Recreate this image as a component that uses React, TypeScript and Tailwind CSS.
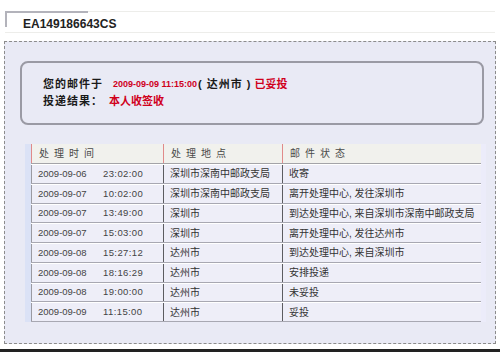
const rows = [
  ["2009-09-06", "23:02:00", "深圳市深南中邮政支局", "收寄"],
  ["2009-09-07", "10:02:00", "深圳市深南中邮政支局", "离开处理中心, 发往深圳市"],
  ["2009-09-07", "13:49:00", "深圳市", "到达处理中心, 来自深圳市深南中邮政支局"],
  ["2009-09-07", "15:03:00", "深圳市", "离开处理中心, 发往达州市"],
  ["2009-09-08", "15:27:12", "达州市", "到达处理中心, 来自深圳市"],
  ["2009-09-08", "18:16:29", "达州市", "安排投递"],
  ["2009-09-08", "19:00:00", "达州市", "未妥投"],
  ["2009-09-09", "11:15:00", "达州市", "妥投"],
]

function InfoBox() {
  return (
    <div className="ml-[15px] mr-[11px] mt-[19px] h-[64px] rounded-[8px] border-2 border-[#9a9aa4] pl-[21px] pt-[14px] flex flex-col gap-[3px] font-bold text-[11px] leading-[14px]">
      <div className="flex items-center text-[#1a1a1a]">
        <span className="tracking-[1px]">您的邮件于</span>
        <span className="ml-[10px] text-[9px] text-[#d0001c]">2009-09-09 11:15:00</span>
        <span className="ml-[1px] tracking-[1px]">( 达州市 )</span>
        <span className="ml-[3px] text-[#d0001c]">已妥投</span>
      </div>
      <div className="flex items-center text-[#1a1a1a]">
        <span className="tracking-[1px]">投递结果：</span>
        <span className="ml-[6px] text-[#d0001c]">本人收签收</span>
      </div>
    </div>
  )
}

function TrackTable() {
  return (
    <div className="mt-[19px] ml-[20px] mr-[9px] flex">
      {/* light strip on the left of the table */}
      <div className="w-[6px] bg-[#dbe2f6]" />
      <div className="flex-1 flex flex-col">
        <div className="h-[20px] flex bg-[#f1f1ed] border-b border-[#a4a4a8] text-[10px] text-[#4a4a4a] tracking-[5px]">
          <div className="w-[132px] border-l border-[#e08a8a] pl-[7px] flex items-center">处理时间</div>
          <div className="w-[119px] border-l border-[#e08a8a] pl-[7px] flex items-center">处理地点</div>
          <div className="flex-1 border-l border-[#e08a8a] pl-[7px] flex items-center">邮件状态</div>
        </div>
        {rows.map((r, i) => (
          <div
            key={i}
            className="h-[19.75px] flex bg-[#eeeef8] border-t border-white border-b border-b-[#a8a8b2] text-[10px] text-[#333]"
          >
            <div className="w-[132px] border-l border-[#9a9aa2] pl-[6px] flex items-center text-[9.5px] text-[#444]">
              <span className="w-[65px]">{r[0]}</span>
              <span className="tracking-[0.4px]">{r[1]}</span>
            </div>
            <div className="w-[119px] border-l border-[#5c5c60] pl-[6px] flex items-center">{r[2]}</div>
            <div className="flex-1 border-l border-[#5c5c60] pl-[6px] flex items-center">{r[3]}</div>
          </div>
        ))}
      </div>
      <div className="w-[5px] bg-[#ececfa]" />
    </div>
  )
}

export default function App() {
  return (
    <div className="w-[500px] h-[352px] bg-white flex flex-col overflow-hidden font-['Liberation_Sans','Noto_Sans_CJK_SC',sans-serif]">
      {/* tab with mail number */}
      <div className="pt-[11px] px-[5px] h-[41px]">
        <div className="relative h-[22px] border-t border-b border-[#ededea]">
          <div className="absolute -top-px left-0 w-[83px] h-[16px] border-l-2 border-t-2 border-[#b3b3bb]" />
          <div className="pl-[18px] pt-[5px] text-[12px] leading-[14px] font-bold text-[#222]">EA149186643CS</div>
        </div>
      </div>

      <div className="mx-[4px] h-[303px] border border-dashed border-[#8c8c8c] bg-[#e9eaf5] flex flex-col">
        <InfoBox />
        <TrackTable />
      </div>

      <div className="flex-1" />
      <div className="h-[3px] bg-[#222]" />
    </div>
  )
}
